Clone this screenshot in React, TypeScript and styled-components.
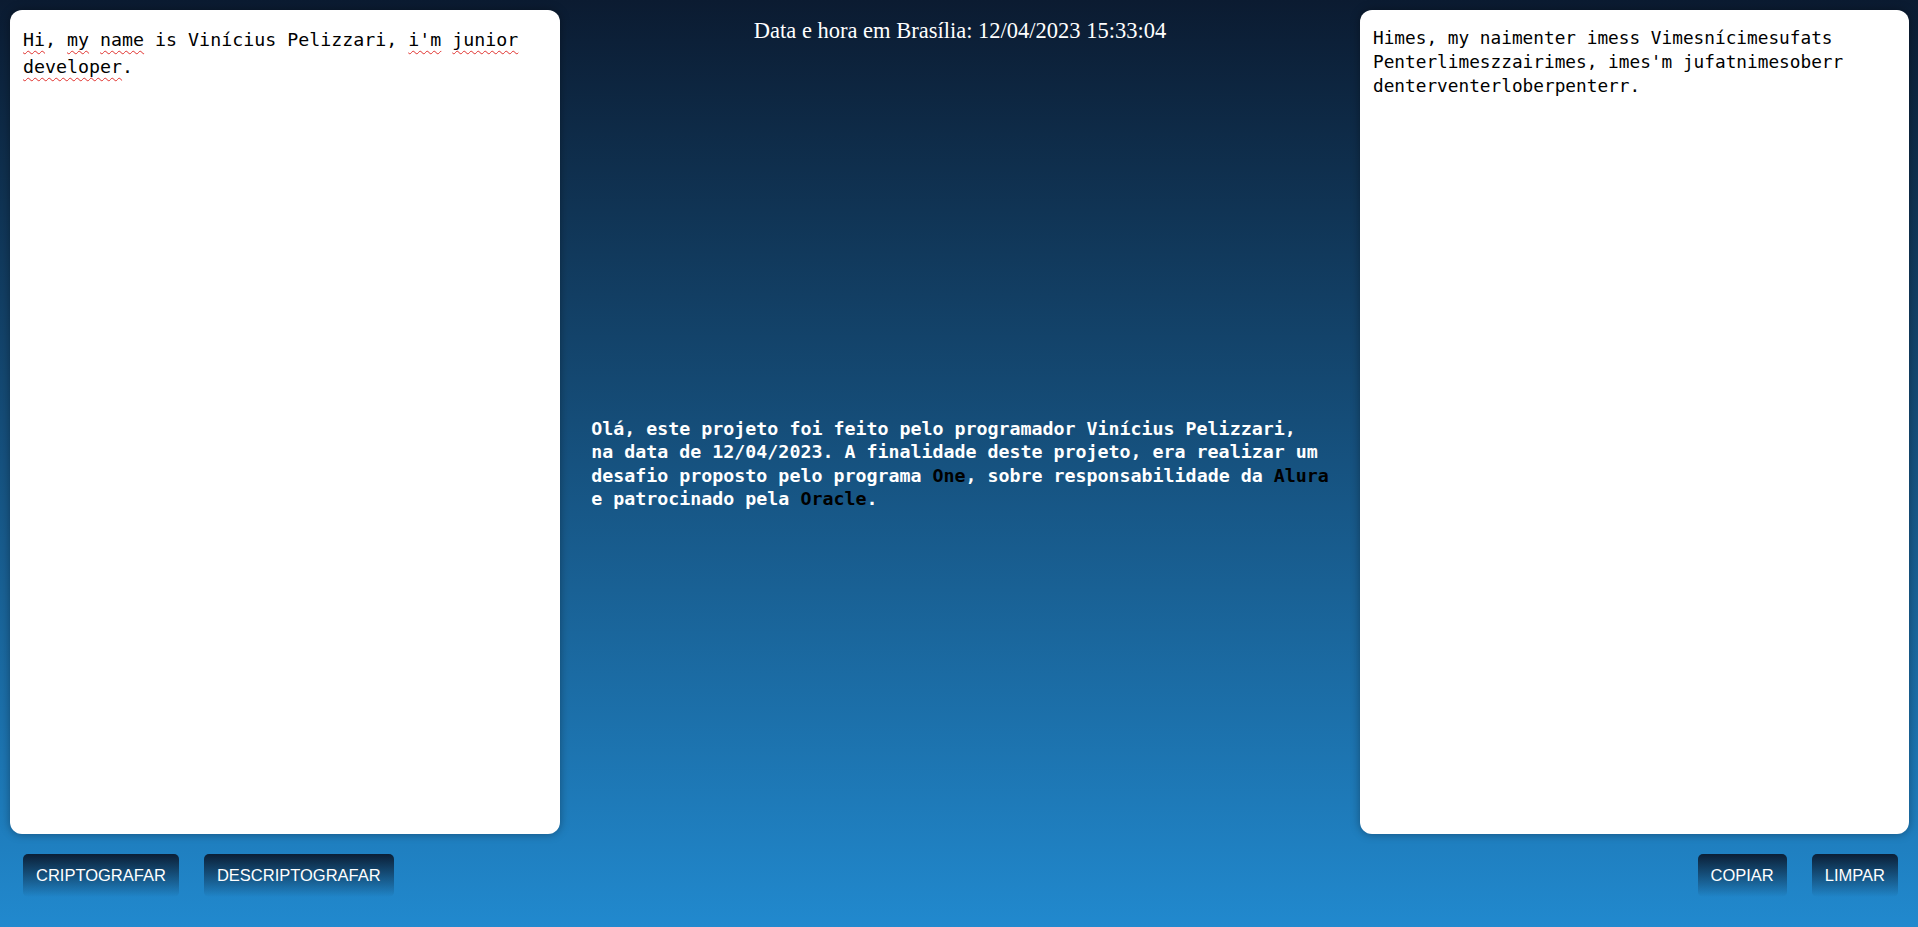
import React from "react"
import styled, { createGlobalStyle } from "styled-components"

const GlobalStyle = createGlobalStyle`
  * {
    box-sizing: border-box;
  }

  html,
  body {
    margin: 0;
    padding: 0;
  }

  body {
    min-height: 100vh;
    background: linear-gradient(180deg, #0b1b31 0%, #2189ce 100%);
    background-attachment: fixed;
  }
`

const Page = styled.main`
  min-height: 100vh;
  padding: 10px 9px 10px 10px;
  display: grid;
  grid-template-columns: 550px 1fr 549px;
`

const Side = styled.section<{ $align: "start" | "end" }>`
  display: flex;
  flex-direction: column;
  gap: 20px;
  align-items: ${p => (p.$align === "end" ? "flex-end" : "flex-start")};
`

const TextPanel = styled.div<{ $size: number; $lineHeight: number }>`
  width: 100%;
  height: 824px;
  padding: 16px 13px;
  background: #fff;
  border-radius: 12px;
  box-shadow: 0 0 10px rgba(0, 0, 0, 0.35);
  font-family: "DejaVu Sans Mono", "Liberation Mono", monospace;
  font-size: ${p => p.$size}px;
  line-height: ${p => p.$lineHeight}px;
  color: #000;
  white-space: pre-wrap;
  overflow-wrap: break-word;
  outline: none;
`

const Misspelled = styled.span`
  text-decoration: underline wavy #e0312e;
  text-decoration-thickness: 1px;
  text-underline-offset: 4px;
  text-decoration-skip-ink: none;
`

const Actions = styled.div<{ $side: "left" | "right" }>`
  display: flex;
  gap: 25px;
  padding: ${p => (p.$side === "left" ? "0 0 0 13px" : "0 11px 0 0")};
`

const ActionButton = styled.button`
  height: 43px;
  padding: 0 13px;
  border: none;
  border-radius: 5px;
  background: linear-gradient(180deg, #0b1f36 0%, rgba(31, 128, 200, 0) 100%);
  color: #fff;
  font-family: "Liberation Sans", Arial, sans-serif;
  font-size: 16.5px;
  text-transform: uppercase;
  cursor: pointer;
`

const Center = styled.section`
  display: grid;
  grid-template-rows: 1fr auto 1fr;
  justify-items: center;
`

const Clock = styled.h1`
  align-self: start;
  margin: 0;
  padding-top: 8px;
  font-family: "Liberation Serif", "Times New Roman", serif;
  font-weight: normal;
  font-size: 22.5px;
  color: #fff;
`

const About = styled.p`
  margin: 0;
  font-family: "DejaVu Sans Mono", "Liberation Mono", monospace;
  font-weight: bold;
  font-size: 18.3px;
  line-height: 23.4px;
  color: #fff;
`

const Brand = styled.span`
  color: #000;
`

const App = () => {
  return (
    <>
      <GlobalStyle />
      <Page>
        <Side $align="start">
          <TextPanel $size={18.3} $lineHeight={27} role="textbox">
            <Misspelled>Hi</Misspelled>, <Misspelled>my</Misspelled>{" "}
            <Misspelled>name</Misspelled> is Vinícius Pelizzari,{" "}
            <Misspelled>i'm</Misspelled> <Misspelled>junior</Misspelled>{" "}
            <Misspelled>developer</Misspelled>.
          </TextPanel>
          <Actions $side="left">
            <ActionButton>Criptografar</ActionButton>
            <ActionButton>Descriptografar</ActionButton>
          </Actions>
        </Side>

        <Center>
          <Clock>Data e hora em Brasília: 12/04/2023 15:33:04</Clock>
          <About>
            Olá, este projeto foi feito pelo programador Vinícius Pelizzari,
            <br />
            na data de 12/04/2023. A finalidade deste projeto, era realizar um
            <br />
            desafio proposto pelo programa <Brand>One</Brand>, sobre
            responsabilidade da <Brand>Alura</Brand>
            <br />e patrocinado pela <Brand>Oracle</Brand>.
          </About>
        </Center>

        <Side $align="end">
          <TextPanel $size={17.75} $lineHeight={24} role="textbox">
            Himes, my naimenter imess Vimesnícimesufats
            Penterlimeszzairimes, imes'm jufatnimesoberr
            denterventerloberpenterr.
          </TextPanel>
          <Actions $side="right">
            <ActionButton>Copiar</ActionButton>
            <ActionButton>Limpar</ActionButton>
          </Actions>
        </Side>
      </Page>
    </>
  )
}

export default App
